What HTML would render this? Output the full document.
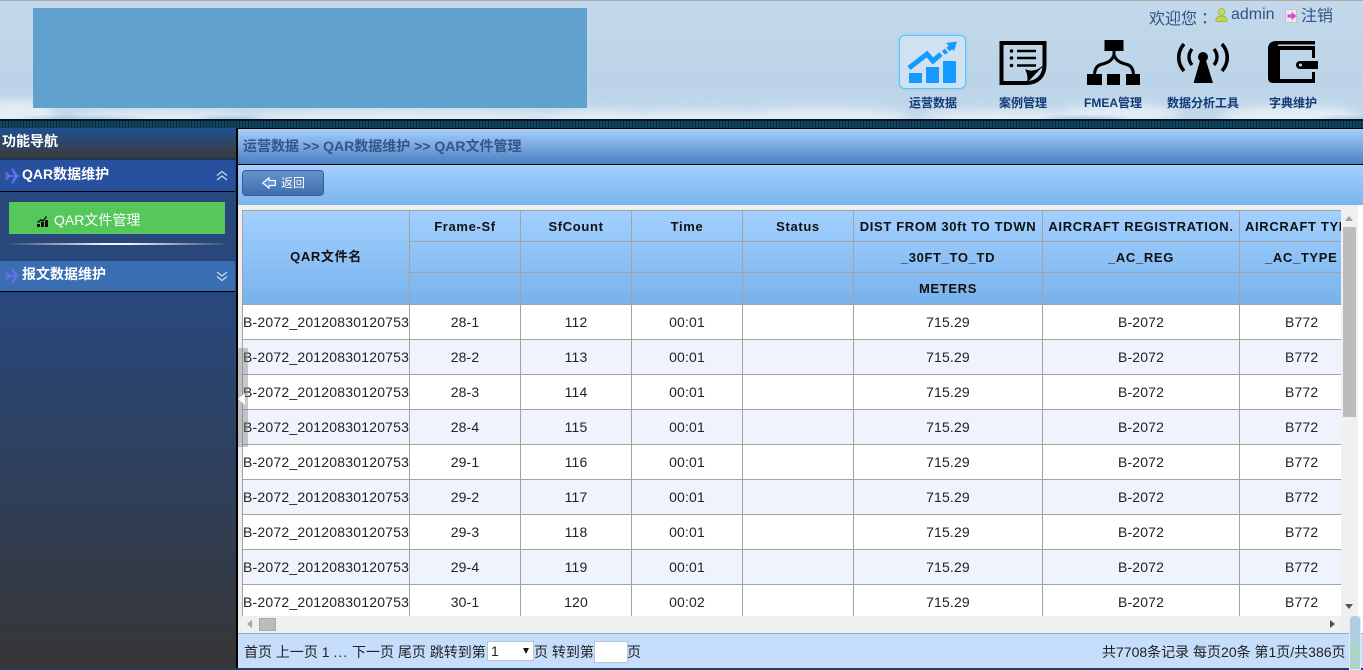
<!DOCTYPE html>
<html>
<head>
<meta charset="utf-8">
<style>
html,body{margin:0;padding:0;width:1363px;height:670px;overflow:hidden;background:#fff;font-family:"Liberation Sans","Noto Sans CJK SC",sans-serif;}
.a{position:absolute;}
#hdr{left:0;top:0;width:1363px;height:119px;background:linear-gradient(#c3d8ea,#bcd4e8 70%,#c2d8ea);border-top:1px solid #aaa;box-sizing:border-box;overflow:hidden;}
#band{left:0;top:119px;width:1363px;height:9px;background:repeating-linear-gradient(90deg,#0f4560 0 2px,#0a2a3e 2px 3px);border-top:2px solid #07141f;box-sizing:border-box;}
.nav{position:absolute;top:96px;width:90px;text-align:center;font-size:12px;font-weight:bold;color:#123a75;line-height:15px;white-space:nowrap;}
#side{left:0;top:128px;width:236px;height:540px;background:linear-gradient(#28487c 0,#28487c 32%,#363636 100%);}
#sb{left:236px;top:128px;width:2px;height:540px;background:#000;}
.sh{position:absolute;left:0;width:235px;border-bottom:1px solid #000;color:#fff;font-size:14px;font-weight:bold;line-height:28px;}
#crumb{left:238px;top:128px;width:1125px;height:37px;box-sizing:border-box;border-top:1px solid #000;border-bottom:1px solid #000;background:linear-gradient(#a6d0fa,#4a7fc0);color:#34548c;font-size:14px;font-weight:bold;line-height:35px;padding-left:5px;}
#bar{left:238px;top:165px;width:1125px;height:40px;background:linear-gradient(#a4d0ff,#7ab4ee);}
#btn{left:242px;top:170px;width:82px;height:26px;box-sizing:border-box;border:1px solid #3a5f98;border-radius:4px;background:linear-gradient(#6492cc,#3e6eae);color:#fff;font-size:12px;line-height:24px;}
#gray{left:238px;top:205px;width:1125px;height:428px;background:#eee;}
#wrap{left:242px;top:210px;width:1099px;height:406px;overflow:hidden;background:#fff;}
table{border-collapse:collapse;table-layout:fixed;width:1170px;position:absolute;left:0;top:0;}
th,td{border:1px solid #a3a3a3;padding:0;text-align:center;overflow:hidden;white-space:nowrap;}
th{font-size:13px;letter-spacing:.65px;font-weight:bold;color:#111;height:30px;background:transparent;}
thead{background:linear-gradient(#a3d0ff,#78b2ec);}
td{font-size:14px;height:34px;color:#222;letter-spacing:.15px;background:#fff;}
tr.e td{background:#eef3fc;}
td.f{text-align:left;letter-spacing:.2px;}
#foot{left:238px;top:633px;width:1125px;height:35px;box-sizing:border-box;background:#c6ddfc;border-top:1px solid #8ba8d0;font-size:14px;color:#222;line-height:36px;white-space:nowrap;}
#bot{left:0;top:668px;width:1363px;height:2px;background:#24405e;}
.tri{position:absolute;width:0;height:0;}
</style>
</head>
<body>
<div id="hdr" class="a">
<svg width="1363" height="119" style="position:absolute;left:0;top:-1px">
<defs><filter id="b"><feGaussianBlur stdDeviation="5"/></filter></defs>
<g filter="url(#b)" fill="#eaf2f9" opacity=".85">
<ellipse cx="15" cy="116" rx="40" ry="16"/><ellipse cx="600" cy="120" rx="60" ry="10"/><ellipse cx="700" cy="120" rx="80" ry="10"/>
<ellipse cx="820" cy="118" rx="90" ry="10"/><ellipse cx="400" cy="118" rx="160" ry="8"/><ellipse cx="1000" cy="118" rx="80" ry="8"/>
<ellipse cx="1120" cy="114" rx="60" ry="9"/><ellipse cx="1290" cy="118" rx="70" ry="12"/><ellipse cx="160" cy="118" rx="90" ry="7"/>
</g>
<g filter="url(#b)" fill="#8fb5da" opacity=".75"><ellipse cx="1085" cy="124" rx="40" ry="7"/><ellipse cx="80" cy="124" rx="60" ry="6"/><ellipse cx="1350" cy="124" rx="30" ry="6"/><ellipse cx="230" cy="122" rx="30" ry="5"/></g>
</svg>
</div>
<div class="a" style="left:33px;top:8px;width:554px;height:100px;background:#61a1cd;"></div>

<div class="a" style="left:1149px;top:7px;font-size:16px;line-height:20px;color:#2d5585;white-space:nowrap;">欢迎您<span style="font-family:'Noto Sans CJK TC',sans-serif;">：</span></div>
<svg class="a" style="left:1215px;top:8px" width="13" height="14" viewBox="0 0 13 14"><circle cx="6.500" cy="4" r="3.400" fill="#c8d860" stroke="#9ab030" stroke-width=".7"/><path d="M.8 13.500c0-4 2-5.500 5.700-5.500s5.700 1.500 5.700 5.500z" fill="#c0d650" stroke="#9ab030" stroke-width=".7"/></svg>
<div class="a" style="left:1231px;top:5px;font-size:16px;line-height:20px;color:#2d5585;">admin</div>
<svg class="a" style="left:1285px;top:9px" width="13" height="14" viewBox="0 0 13 14"><rect x=".5" y=".5" width="11" height="13" fill="#e8e8ee" stroke="#bbb" stroke-width=".7"/><path d="M2.500 5.500h4V3l5 4-5 4V8.500h-4z" fill="#e040c8"/></svg>
<div class="a" style="left:1301px;top:7px;font-size:16px;line-height:20px;color:#2d5585;">注销</div>

<!-- nav icons -->
<div class="a" style="left:899px;top:35px;width:67px;height:54px;box-sizing:border-box;border:1.500px solid #5cc4ff;border-radius:6px;background:#d0e2f1;box-shadow:0 0 2px #6cccff;"></div>
<svg class="a" style="left:899px;top:35px" width="68" height="55" viewBox="0 0 68 55">
<rect x="10" y="38" width="13" height="10" fill="#139bff"/><rect x="27" y="32" width="13" height="16" fill="#139bff"/><rect x="44" y="26" width="13" height="22" fill="#139bff"/>
<path d="M10 33L28 19l6 7 8-7" fill="none" stroke="#139bff" stroke-width="5"/>
<path d="M44.500 18l3-2.500M49 14.500l3-2.500" stroke="#139bff" stroke-width="5" fill="none"/>
<path d="M47 8l11-1.500-3 9.500z" fill="#139bff"/>
</svg>
<svg class="a" style="left:999px;top:40px" width="48" height="46" viewBox="0 0 48 46">
<path d="M2.500 3h43v22c0 11-7 18-18 18H2.500z" fill="none" stroke="#000" stroke-width="4"/>
<path d="M27 44c3-3 2-9 0-14 5 2 12 2 19-6" fill="#000" stroke="#000" stroke-width="1"/>
<circle cx="12.500" cy="11" r="1.800"/><circle cx="12.500" cy="18" r="1.800"/><circle cx="12.500" cy="25.500" r="1.800"/>
<path d="M18 11h19M18 18h19M18 25.500h19" stroke="#000" stroke-width="2.600"/>
</svg>
<svg class="a" style="left:1087px;top:40px" width="54" height="46" viewBox="0 0 54 46">
<rect x="17.500" y="0" width="19" height="11"/><rect x="0" y="34" width="15" height="11"/><rect x="20" y="34" width="13" height="11"/><rect x="39" y="34" width="14" height="11"/>
<path d="M27 11v4c-2 6-7 8-13 9.500-4 1-6 4-6.500 9.500M27 15c2 6 7 8 13 9.500 4 1 6 4 6.500 9.500" fill="none" stroke="#000" stroke-width="3"/>
</svg>
<svg class="a" style="left:1177px;top:41px" width="52" height="44" viewBox="0 0 52 44">
<circle cx="26" cy="16" r="5"/><path d="M23.500 18h5l7.500 24H16.500z"/>
<g fill="none" stroke="#000" stroke-width="3.400"><path d="M15 8c-4 5-4 11 0 16"/><path d="M37 8c4 5 4 11 0 16"/><path d="M7 3c-7 8-7 19 0 27" stroke-width="3.600"/><path d="M45 3c7 8 7 19 0 27" stroke-width="3.600"/></g>
</svg>
<svg class="a" style="left:1267px;top:40px" width="52" height="46" viewBox="0 0 52 46">
<path d="M48 1H9C4 1 1 4 1 9V38c0 3 2 5 5 5H48V32H45V39H13V10H45V18H48V6H11V4.500H48z" fill="#000"/>
<path d="M33 21H51V29H33a4 4 0 0 1 0-8z" fill="#000"/><circle cx="33.500" cy="25" r="1.500" fill="#cfe0ee"/>
</svg>
<div class="nav" style="left:888px;">运营数据</div>
<div class="nav" style="left:978px;">案例管理</div>
<div class="nav" style="left:1068px;">FMEA管理</div>
<div class="nav" style="left:1158px;">数据分析工具</div>
<div class="nav" style="left:1248px;">字典维护</div>

<div id="band" class="a"></div>

<!-- sidebar -->
<div id="side" class="a"></div>
<div id="sb" class="a"></div>
<div class="a" style="left:0;top:128px;width:236px;height:30px;background:linear-gradient(#20508f,#3a3a3c);color:#fff;font-size:14px;font-weight:bold;line-height:26px;padding-left:2px;box-sizing:border-box;">功能导航</div>
<div class="a" style="left:0;top:158px;width:236px;height:2px;background:#17345f;"></div>
<div class="sh" style="top:160px;height:31px;background:#27519f;padding-left:22px;box-sizing:content-box;width:213px;">QAR数据维护</div>
<div class="sh" style="top:261px;height:30px;background:#3a6eb2;padding-left:22px;width:213px;line-height:26px;">报文数据维护</div>
<svg class="a" style="left:3px;top:167px" width="18" height="18" viewBox="0 0 18 18"><path d="M0 9l4-.7-2-3h2l3.500 3H11L8 1.500h2l5 6.800 3 .7-3 .7-5 6.800H8l3-6.800H7.500l-3.500 3H2l2-3z" fill="#6470e8"/></svg>
<svg class="a" style="left:3px;top:267px" width="18" height="18" viewBox="0 0 18 18"><path d="M0 9l4-.7-2-3h2l3.500 3H11L8 1.500h2l5 6.800 3 .7-3 .7-5 6.800H8l3-6.800H7.500l-3.500 3H2l2-3z" fill="#6470e8"/></svg>
<svg class="a" style="left:216px;top:170px" width="12" height="11" viewBox="0 0 12 11"><path d="M1 5.500l5-4 5 4M1 10l5-4 5 4" fill="none" stroke="#cfdcef" stroke-width="1.200"/></svg>
<svg class="a" style="left:216px;top:271px" width="12" height="11" viewBox="0 0 12 11"><path d="M1 1l5 4 5-4M1 5.500l5 4 5-4" fill="none" stroke="#cfdcef" stroke-width="1.200"/></svg>
<div class="a" style="left:9px;top:202px;width:216px;height:32px;background:#56c75a;"></div>
<svg class="a" style="left:37px;top:216px" width="11" height="11" viewBox="0 0 11 11"><path d="M0 8h3v3H0zM4 6h3v5H4zM8 4h3v7H8zM0 6l4-3 2 1 3-4 1 1-4 5-2-1-3 2z" fill="#111"/></svg>
<div class="a" style="left:54px;top:210px;color:#fff;font-size:14px;line-height:20px;">QAR文件管理</div>
<div class="a" style="left:9px;top:243px;width:216px;height:2px;background:linear-gradient(90deg,#3c4f70,#f4f6fa 45%,#f4f6fa 55%,#3c4f70);"></div>

<!-- main -->
<div id="crumb" class="a">运营数据 &gt;&gt; QAR数据维护 &gt;&gt; QAR文件管理</div>
<div id="bar" class="a"></div>
<div id="btn" class="a">
<svg style="position:absolute;left:19px;top:6px" width="14" height="12" viewBox="0 0 14 12"><path d="M7 .8v2.700h6.300v5H7v2.700L.8 6z" fill="#5f95dc" stroke="#fff" stroke-width="1.200"/></svg>
<span style="position:absolute;left:38px;top:0;">返回</span>
</div>
<div id="gray" class="a"></div>
<div id="wrap" class="a">
<table>
<colgroup><col style="width:167px"><col style="width:111px"><col style="width:111px"><col style="width:111px"><col style="width:111px"><col style="width:189px"><col style="width:197px"><col style="width:173px"></colgroup>
<thead>
<tr><th rowspan="3" style="height:93px;padding-bottom:5px;box-sizing:border-box;">QAR文件名</th><th>Frame-Sf</th><th>SfCount</th><th>Time</th><th>Status</th><th>DIST FROM 30ft TO TDWN</th><th>AIRCRAFT REGISTRATION.</th><th style="text-align:left;padding-left:5px;">AIRCRAFT TYPE</th></tr>
<tr><th></th><th></th><th></th><th></th><th>_30FT_TO_TD</th><th>_AC_REG</th><th style="text-align:left;padding-left:25px;">_AC_TYPE</th></tr>
<tr><th style="height:31px"></th><th></th><th></th><th></th><th>METERS</th><th></th><th></th></tr>
</thead>
<tbody>
<tr><td class="f">B-2072_20120830120753</td><td>28-1</td><td>112</td><td>00:01</td><td></td><td>715.29</td><td>B-2072</td><td style="text-align:left;padding-left:45px;">B772</td></tr>
<tr class="e"><td class="f">B-2072_20120830120753</td><td>28-2</td><td>113</td><td>00:01</td><td></td><td>715.29</td><td>B-2072</td><td style="text-align:left;padding-left:45px;">B772</td></tr>
<tr><td class="f">B-2072_20120830120753</td><td>28-3</td><td>114</td><td>00:01</td><td></td><td>715.29</td><td>B-2072</td><td style="text-align:left;padding-left:45px;">B772</td></tr>
<tr class="e"><td class="f">B-2072_20120830120753</td><td>28-4</td><td>115</td><td>00:01</td><td></td><td>715.29</td><td>B-2072</td><td style="text-align:left;padding-left:45px;">B772</td></tr>
<tr><td class="f">B-2072_20120830120753</td><td>29-1</td><td>116</td><td>00:01</td><td></td><td>715.29</td><td>B-2072</td><td style="text-align:left;padding-left:45px;">B772</td></tr>
<tr class="e"><td class="f">B-2072_20120830120753</td><td>29-2</td><td>117</td><td>00:01</td><td></td><td>715.29</td><td>B-2072</td><td style="text-align:left;padding-left:45px;">B772</td></tr>
<tr><td class="f">B-2072_20120830120753</td><td>29-3</td><td>118</td><td>00:01</td><td></td><td>715.29</td><td>B-2072</td><td style="text-align:left;padding-left:45px;">B772</td></tr>
<tr class="e"><td class="f">B-2072_20120830120753</td><td>29-4</td><td>119</td><td>00:01</td><td></td><td>715.29</td><td>B-2072</td><td style="text-align:left;padding-left:45px;">B772</td></tr>
<tr><td class="f">B-2072_20120830120753</td><td>30-1</td><td>120</td><td>00:02</td><td></td><td>715.29</td><td>B-2072</td><td style="text-align:left;padding-left:45px;">B772</td></tr>
</tbody>
</table>
</div>

<!-- scrollbars -->
<div class="a" style="left:1341px;top:210px;width:17px;height:406px;background:#f0f0f0;"></div>
<div class="a" style="left:1358px;top:205px;width:5px;height:428px;background:#fff;"></div>
<div class="a" style="left:1343px;top:227px;width:13px;height:190px;background:#bcbcbc;"></div>
<div class="tri" style="left:1345px;top:216px;border:4px solid transparent;border-top:0;border-bottom:5px solid #a3a3a3;"></div>
<div class="tri" style="left:1345px;top:604px;border:4px solid transparent;border-bottom:0;border-top:5px solid #505050;"></div>
<div class="a" style="left:242px;top:616px;width:1099px;height:17px;background:#f0f0f0;"></div>
<div class="a" style="left:259px;top:618px;width:17px;height:13px;background:#bcbcbc;border:1px solid #aaa;box-sizing:border-box;"></div>
<div class="tri" style="left:247px;top:620px;border:4px solid transparent;border-left:0;border-right:5px solid #a3a3a3;"></div>
<div class="tri" style="left:1330px;top:620px;border:4px solid transparent;border-right:0;border-left:5px solid #505050;"></div>

<!-- footer -->
<div id="foot" class="a">
<span style="position:absolute;left:6px;top:0;">首页 上一页 1 <span style="letter-spacing:1px;">...</span> 下一页 尾页 跳转到第</span>
<span style="position:absolute;left:249px;top:7px;width:47px;height:20px;box-sizing:border-box;background:#fff;border:1px solid #b5c5da;font-size:14px;line-height:18px;padding-left:3px;">1<span class="tri" style="left:35px;top:6px;border:3.500px solid transparent;border-bottom:0;border-top:6px solid #111;"></span></span>
<span style="position:absolute;left:296px;top:0;">页 转到第</span>
<span style="position:absolute;left:356px;top:7px;width:34px;height:22px;box-sizing:border-box;background:#fff;border:1px solid #b5c5da;"></span>
<span style="position:absolute;left:389px;top:0;">页</span>
<span style="position:absolute;left:864px;top:0;">共7708条记录 每页20条 第1页/共386页</span>
</div>
<div id="bot" class="a"></div>

<!-- splitter handle -->
<div class="a" style="left:238px;top:348px;width:10px;height:99px;background:rgba(120,120,120,.4);"></div>
<div class="tri" style="left:238px;top:393px;border:6px solid transparent;border-left:0;border-right:7px solid #fff;"></div>

<!-- right corner widget -->
<div class="a" style="left:1349px;top:615px;width:12px;height:55px;background:linear-gradient(#b0cde6 0,#b0cde6 26px,transparent 26px),repeating-linear-gradient(#a8dcb0 0 3px,#b0cde6 3px 6px);border-radius:5px 5px 0 0;border:1px solid #e2ecf4;box-sizing:border-box;"></div>
</body>
</html>
